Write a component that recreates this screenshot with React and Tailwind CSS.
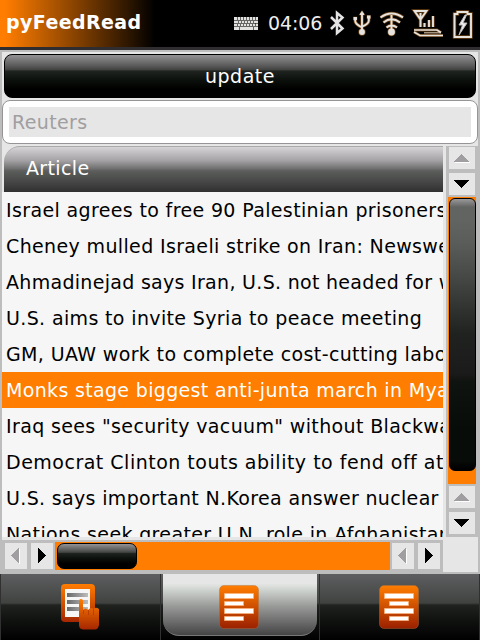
import React from "react";

const articles = [
  { title: "Israel agrees to free 90 Palestinian prisoners" },
  { title: "Cheney mulled Israeli strike on Iran: Newsweek" },
  { title: "Ahmadinejad says Iran, U.S. not headed for war", tracking: "tracking-[0.3px]" },
  { title: "U.S. aims to invite Syria to peace meeting" },
  { title: "GM, UAW work to complete cost-cutting labor" },
  { title: "Monks stage biggest anti-junta march in Myanmar", tracking: "tracking-[0.33px]" },
  { title: 'Iraq sees "security vacuum" without Blackwater' },
  { title: "Democrat Clinton touts ability to fend off attacks", tracking: "tracking-[0.5px]" },
  { title: "U.S. says important N.Korea answer nuclear", tracking: "tracking-[0.34px]" },
  { title: "Nations seek greater U.N. role in Afghanistan" },
];
const SELECTED = 5;

function StatusIcons() {
  return (
    <>
      <svg className="mt-[17px] ml-[9px] h-[13px] w-6 shrink-0" viewBox="0 0 24 13">
        <rect width="24" height="13" fill="#e2e2e0" />
        <g stroke="#151515" strokeWidth="1">
          <path d="M0 3.5H24M0 6.5H24M0 9.5H24" opacity=".6" />
          <path d="M3.500 0V3M6.500 0V3M9.500 0V3M12.500 0V3M15.500 0V3M18.500 0V3M21.500 0V3M4.500 4V6M7.500 4V6M10.500 4V6M13.500 4V6M16.500 4V6M19.500 4V6M3.500 7V9M6.500 7V9M9.500 7V9M12.500 7V9M15.500 7V9M18.500 7V9M21.500 6V9M5.500 10V13M19.500 10V13" opacity=".6" />
        </g>
      </svg>
      <div className="mt-[11px] ml-[10px] w-[54px] text-[19px] leading-[24px] tracking-[-0.1px] whitespace-nowrap text-[#eeeeee]">04:06</div>
      <svg className="ml-[8px] h-[47px] w-4 shrink-0" viewBox="330 0 16 47" fill="none" stroke="#e4e4e4" strokeWidth="2.5">
        <path d="M331 17L342.500 28.500L337 33V13L342.500 17.500L331 29" />
      </svg>
      <svg className="h-[47px] w-[134px] shrink-0" viewBox="346 0 134 47" fill="none">
        {[["#6b4215", 3.4], ["#e6e2de", 1.9]].map(([c, w]) => (
          <g key={c} stroke={c} strokeWidth={w}>
            <path d="M362 13V31M355.200 18V21Q355.200 24 362 27.500M368.800 17V20.500Q368.800 24 362 26.500" />
            <path d="M360 14.500L362 11.500L364 14.500Z" fill={c} strokeWidth={w / 2} />
            <circle cx="362" cy="32" r="2" fill={c} />
            <rect x="354" y="17.500" width="2.500" height="2" fill={c} strokeWidth={w / 2} />
            <rect x="367.500" y="16" width="2.500" height="2" fill={c} strokeWidth={w / 2} />
            <path d="M380.500 17.500Q391.500 9.500 403 17.500M383.500 22.500Q391.500 16 400 22.500M386.500 27.500Q391.500 23.500 397 27.500M391.500 15V32" />
            <circle cx="391.500" cy="32" r="2.500" fill={c} />
            <path d="M414.500 11H426.500L420.500 19.500ZM420.500 13V27M424.500 23V27M429 20V27M433 16V27" />
            <path d="M414 30H437L441 32.500M414 32L420 35.500H443" strokeWidth={w * 0.9} />
            <path d="M424 32.800H441" strokeWidth={w * 0.4} />
            <path d="M454.500 14H457.500V12H467.500V14H471V37H454.500Z" />
          </g>
        ))}
        <path d="M465 15L459 25H462.500L459 35L467 23H463L466.500 15Z" fill="#eeeeee" stroke="#bbbbbb" strokeWidth="1" />
      </svg>
    </>
  );
}

function Arrow({ dir, dim, className }) {
  const paths = {
    up: "M5 14.500L12.500 6.500L20 14.500Z",
    down: "M5 7L20 7L12.500 15Z",
    left: "M6 12.500L14 5V20Z",
    right: "M7 5V20L15 12.500Z",
  };
  const vertical = dir === "up" || dir === "down";
  return (
    <svg
      className={`shrink-0 bg-[#e6e6e6] ${vertical ? "h-[22px] w-[26px]" : "h-[26px] w-[22px]"} ${className || ""}`}
      viewBox={vertical ? "0 0 26 22" : "0 0 22 26"}
      shapeRendering="crispEdges"
    >
      {dim && <path d={paths[dir]} fill="#fff" transform="translate(1 1)" />}
      <path d={paths[dir]} fill={dim ? "#a09ea0" : "#000"} />
    </svg>
  );
}

function PageIcon({ centered }) {
  const short = centered ? 10.5 : 5.5;
  const id = centered ? "pageCenter" : "pageLeft";
  return (
    <svg className="mr-[2px] h-[44px] w-10" viewBox="0 0 40 44">
      <defs>
        <linearGradient id={id} x1="0" y1="0" x2="0" y2="1">
          <stop offset="0" stopColor="#ff7d00" />
          <stop offset="1" stopColor="#9b2000" />
        </linearGradient>
      </defs>
      <rect x=".5" y=".5" width="39" height="43" rx="4.500" fill={`url(#${id})`} stroke="#b07040" strokeOpacity=".4" />
      <g fill="#fff" stroke="#ffb47a" strokeOpacity=".6">
        <rect x="5.500" y="8.500" width="29" height="5" />
        <rect x={short} y="16.500" width="19" height="4" />
        <rect x="5.500" y="23.500" width="29" height="5" />
        <rect x={short} y="31.500" width="19" height="4" />
      </g>
    </svg>
  );
}

function TouchIcon() {
  return (
    <svg className="h-[46px] w-[39px]" viewBox="0 0 39 46">
      <defs>
        <linearGradient id="sheet" x1="0" y1="0" x2="0" y2="1">
          <stop offset="0" stopColor="#ff7d00" />
          <stop offset="1" stopColor="#a52600" />
        </linearGradient>
        <linearGradient id="line" x1="0" y1="0" x2="1" y2="0">
          <stop offset="0" stopColor="#686868" />
          <stop offset="1" stopColor="#bdbdbd" />
        </linearGradient>
      </defs>
      <rect x="0" y="0" width="34" height="38" rx="4" fill="url(#sheet)" />
      <rect x="4" y="5" width="25" height="28" fill="#f6f6f6" />
      <rect x="6" y="9" width="21" height="4" fill="url(#line)" />
      <rect x="6" y="16" width="21" height="4" fill="url(#line)" />
      <rect x="6" y="23" width="21" height="4" fill="url(#line)" />
      <path d="M18 17Q18 15 20 15Q22 15 22 17V26Q24.500 23 27 26Q30 22.500 32.500 25Q35 22.500 38 25V41Q37 45.500 34 45.500H22Q18 45 18 41Z" fill="url(#sheet)" />
      <path d="M22.500 26V30M27.500 26V31M32.500 25V31" stroke="#b83800" strokeWidth=".8" />
    </svg>
  );
}

const glossy =
  "bg-[linear-gradient(to_bottom,#949294_0%,#626262_22%,#424442_35%,#202420_38%,#0c100c_60%,#000_82%)]";
const glossyTab =
  "bg-[linear-gradient(to_bottom,#5e5e60_0%,#404240_44%,#202220_47%,#101210_70%,#000_100%)]";

export default function App() {
  return (
    <div className="flex h-[640px] w-[480px] flex-col overflow-hidden bg-[#bdbdbd] font-['DejaVu_Sans',sans-serif] text-[19px] tracking-[0.36px]">
      <header className="flex h-[50px] shrink-0 border-b-[3px] border-[#2f2d2f] bg-black bg-[linear-gradient(to_right,#ff7d00_0,#ff7d00_5px,#000_155px)]">
        <h1 className="mt-[10px] ml-[6px] w-[219px] text-[19px] leading-6 font-bold tracking-[0.4px] whitespace-nowrap text-white">pyFeedRead</h1>
        <StatusIcons />
      </header>

      <main className="flex h-[524px] shrink-0 flex-col pt-[2px] pl-[2px]">
        <div className="h-[94px] w-[476px] shrink-0 bg-[#e6e6e6] pt-[2px]">
          <button className={`ml-[2px] block h-[44px] w-[472px] rounded-[8px] border border-black text-[19px] tracking-[0.5px] text-white ${glossy}`}>
            update
          </button>
          <div className="mt-[2px] h-[44px] w-[476px] rounded-[8px] border border-[#969496] bg-white p-[6px]">
            <div className="h-[30px] bg-[#e6e6e6] pl-[3px] leading-[30px] text-[#a09ea0]">Reuters</div>
          </div>
        </div>

        <div className="flex h-[391px] shrink-0">
          <section className="h-[391px] w-[444px] shrink-0 overflow-hidden bg-[#e6e6e6]">
            <div className="h-[46px] w-[441px] pl-[2px]">
              <div className="h-[46px] rounded-tl-[16px] border-t border-[#aaaaaa] bg-[linear-gradient(to_bottom,#d6d4d6_0%,#a4a2a4_30%,#737373_47%,#5c5e5c_53%,#303030_100%)] pl-[22px] leading-[42px] text-white">
                Article
              </div>
            </div>
            <ul className="h-[345px] w-[441px] overflow-hidden bg-[#f6f6f6]">
              {articles.map(({ title, tracking }, i) => (
                <li
                  key={title}
                  className={`h-9 overflow-hidden pl-1 leading-9 whitespace-nowrap ${tracking || ""} ${i === SELECTED ? "bg-[#ff7d00] text-white" : "text-black"}`}
                >
                  {title}
                </li>
              ))}
            </ul>
          </section>
          <aside className="flex w-[34px] flex-col items-start pt-px pl-[2px]">
            <Arrow dir="up" dim className="ml-px" />
            <Arrow dir="down" className="mt-1 ml-px" />
            <div className="mt-[2px] h-[287px] w-7 shrink-0 bg-[#ff7d00] pt-px pl-px">
              <div className="h-[273px] rounded-[6px] border border-black bg-[linear-gradient(to_bottom,#9b999b_0px,#626462_8px,#626462_22px,#5a5c5a_45px,#484a48_75px,#343634_105px,#202220_135px,#1a1a1a_175px,#101410_182px,#080c08_230px,#080c08_262px,#000_270px)]" />
            </div>
            <Arrow dir="up" dim className="mt-[2px] ml-px" />
            <Arrow dir="down" className="mt-1 ml-px" />
          </aside>
        </div>

        <div className="flex h-[35px] shrink-0">
          <div className="flex h-[35px] w-[441px] items-center border-t-[3px] border-[#e6e6e6]">
            <Arrow dir="left" dim className="ml-[3px]" />
            <Arrow dir="right" className="ml-1" />
            <div className="ml-[2px] h-[28px] w-[335px] bg-[#ff7d00] px-[2px] py-px">
              <div className={`h-[26px] w-[80px] rounded-[7px] border border-black ${glossy}`} />
            </div>
            <Arrow dir="left" dim className="ml-[2px]" />
            <Arrow dir="right" className="ml-1" />
          </div>
          <div className="h-[35px] w-[35px] bg-[#e6e6e6]" />
        </div>
      </main>

      <nav className={`flex h-[66px] shrink-0 ${glossyTab}`}>
        <div className="flex w-[160px] justify-center border-l border-[#303030] pt-[10px]">
          <TouchIcon />
        </div>
        <div className="w-[160px] border-x border-[#303030] px-[2px]">
          <div className="flex h-[62px] justify-center rounded-b-[16px] border-b border-[#777777] bg-[linear-gradient(to_bottom,#e6e6e6_0%,#e6e6e6_15%,#dee2de_19%,#9a9c9a_52%,#444444_100%)] pt-[11px]">
            <PageIcon />
          </div>
        </div>
        <div className="flex w-[160px] justify-center border-r border-[#303030] pt-[11px]">
          <PageIcon centered />
        </div>
      </nav>
    </div>
  );
}
